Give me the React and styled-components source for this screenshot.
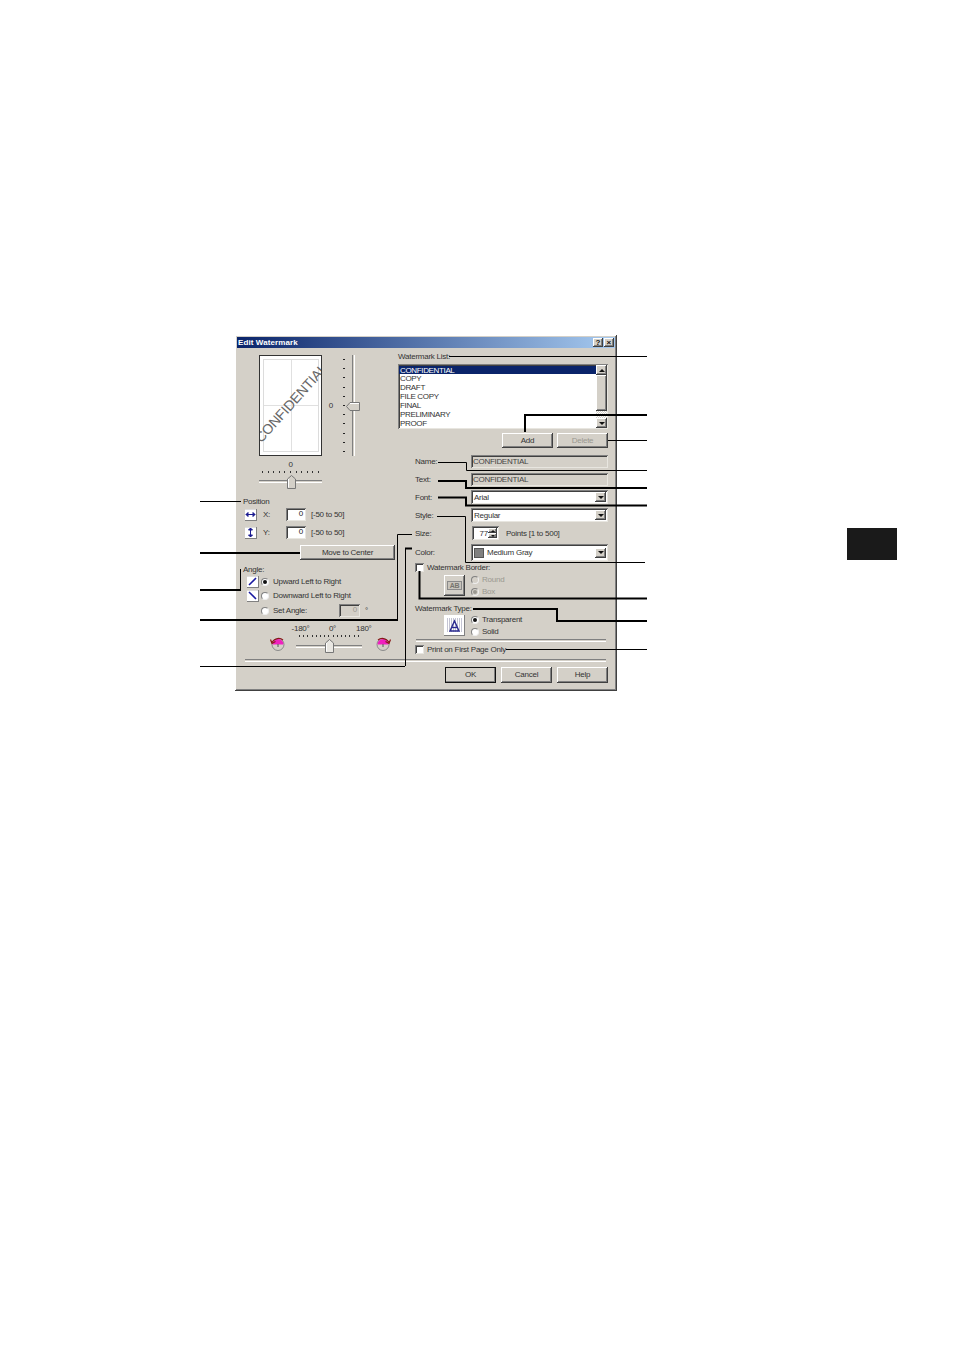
import React from 'react';
import styled, { createGlobalStyle, css } from 'styled-components';

const GlobalStyle = createGlobalStyle`
  html, body {
    margin: 0;
    background: #fff;
  }
  body {
    font-family: 'Liberation Sans', Arial, sans-serif;
  }
`;

const raised = css`
  background: #d4d0c8;
  box-shadow: inset -1px -1px 0 #404040, inset 1px 1px 0 #fff, inset -2px -2px 0 #808080;
`;
const sunken = css`
  box-shadow: inset 1px 1px 0 #808080, inset -1px -1px 0 #e8e6e0, inset 2px 2px 0 #404040;
`;

const Page = styled.div`
  position: relative;
  display: flex;
  align-items: flex-start;
  box-sizing: border-box;
  width: 954px;
  height: 1350px;
  padding: 335px 0 0 235px;
  overflow: hidden;
  background: #fff;
`;
const SideTab = styled.div`
  width: 50px;
  height: 32px;
  margin: 193px 0 0 230px;
  background: #1a1a1a;
`;
const Dialog = styled.div`
  ${raised}
  box-sizing: border-box;
  width: 382px;
  height: 356px;
  padding: 2px;
  font-size: 8px;
  line-height: 10px;
  letter-spacing: -0.25px;
  color: #333;
`;
const TitleBar = styled.div`
  display: flex;
  align-items: center;
  justify-content: space-between;
  height: 11px;
  padding: 0 1px;
  background: linear-gradient(90deg, #0a246a, #a6caf0);
  color: #fff;
  font-weight: 700;
  letter-spacing: 0.1px;
`;
const TitleButtons = styled.div`
  display: flex;
  gap: 1px;
`;
const TitleButton = styled.div`
  ${raised}
  width: 10px;
  height: 9px;
  color: #111;
  font-size: 8px;
  font-weight: 700;
  line-height: 9px;
  text-align: center;
`;
const Body = styled.div`
  display: grid;
  grid-template-columns: 160px 1fr;
  height: 311px;
`;
const Column = styled.div`
  display: flex;
  flex-direction: column;
  min-width: 0;
`;
const Row = styled.div`
  display: flex;
  align-items: center;
  flex: none;
  height: ${(p) => p.$h}px;
  margin-top: ${(p) => p.$mt || 0}px;
  padding-left: ${(p) => p.$pl || 0}px;
`;
const Label = styled.span`
  flex: none;
  padding-top: 1px;
  white-space: nowrap;
  width: ${(p) => (p.$w ? `${p.$w}px` : 'auto')};
  margin-left: ${(p) => p.$ml || 0}px;
  text-align: ${(p) => p.$align || 'left'};
  color: ${(p) => (p.$disabled ? '#9a9890' : 'inherit')};
`;

const Preview = styled.div`
  position: relative;
  flex: none;
  box-sizing: border-box;
  width: 63px;
  height: 101px;
  overflow: hidden;
  border: 1px solid #333;
  background: #fff;
`;
const PreviewMargin = styled.div`
  position: absolute;
  inset: 3px 2px 3px 3px;
  border: 1px solid #dcdcdc;
  background:
    linear-gradient(#e0e0e0, #e0e0e0) center / 100% 1px no-repeat,
    linear-gradient(#e0e0e0, #e0e0e0) center / 1px 100% no-repeat;
`;
const PreviewText = styled.span`
  position: absolute;
  left: 50%;
  top: 47%;
  color: #666;
  font-size: 14px;
  line-height: 16px;
  letter-spacing: -0.2px;
  white-space: nowrap;
  transform: translate(-50%, -50%) rotate(-48deg);
`;

const VSlider = styled.div`
  position: relative;
  flex: none;
  width: 18px;
  height: 101px;
  margin-left: 10px;
`;
const VTicks = styled.div`
  position: absolute;
  left: 0;
  top: 4px;
  bottom: 4px;
  display: flex;
  flex-direction: column;
  justify-content: space-between;
`;
const VTick = styled.i`
  display: block;
  width: 2px;
  height: 1px;
  background: #222;
`;
const VTrack = styled.div`
  position: absolute;
  left: 9px;
  top: 0;
  bottom: 0;
  width: 1px;
  border-left: 1px solid #808080;
  border-right: 1px solid #fff;
`;
const Thumb = styled.svg`
  position: absolute;
  left: ${(p) => p.$x}px;
  top: ${(p) => p.$y}px;
`;

const HSlider = styled.div`
  position: relative;
  flex: none;
  width: ${(p) => p.$w}px;
  height: ${(p) => p.$h}px;
  margin-left: ${(p) => p.$ml || 0}px;
`;
const HTicks = styled.div`
  position: absolute;
  left: ${(p) => p.$inset}px;
  right: ${(p) => p.$inset}px;
  top: ${(p) => p.$top}px;
  display: flex;
  justify-content: space-between;
`;
const HTick = styled.i`
  display: block;
  width: 1px;
  height: 2px;
  background: #333;
`;
const HTrack = styled.div`
  position: absolute;
  left: 0;
  right: 0;
  top: ${(p) => p.$top}px;
  height: 1px;
  border-top: 1px solid #808080;
  border-bottom: 1px solid #fff;
`;

const Icon = styled.svg`
  display: block;
  flex: none;
  margin-left: ${(p) => p.$ml || 0}px;
`;
const NumberBox = styled.div`
  ${sunken}
  flex: none;
  box-sizing: border-box;
  width: ${(p) => p.$w || 21}px;
  height: 13px;
  margin-left: ${(p) => p.$ml || 0}px;
  padding-right: 3px;
  background: ${(p) => (p.$disabled ? '#d4d0c8' : '#fff')};
  color: ${(p) => (p.$disabled ? '#9a9890' : '#222')};
  line-height: 12px;
  text-align: right;
`;
const Button = styled.div`
  ${raised}
  flex: none;
  width: ${(p) => p.$w || 51}px;
  height: ${(p) => p.$h || 15}px;
  margin-left: ${(p) => p.$ml || 0}px;
  box-sizing: border-box;
  line-height: ${(p) => p.$h || 15}px;
  text-align: center;
  color: ${(p) => (p.$disabled ? '#9a9890' : '#333')};
  ${(p) =>
    p.$default &&
    css`
      outline: 1px solid #111;
      outline-offset: -1px;
    `}
`;
const Radio = styled.i`
  position: relative;
  display: block;
  flex: none;
  box-sizing: border-box;
  width: 8px;
  height: 8px;
  margin-left: ${(p) => p.$ml || 0}px;
  border: 1px solid #808080;
  border-right-color: #eee;
  border-bottom-color: #eee;
  border-radius: 50%;
  background: ${(p) => (p.$disabled ? '#d4d0c8' : '#fff')};
  &::after {
    content: '';
    display: ${(p) => (p.$on ? 'block' : 'none')};
    position: absolute;
    left: 1px;
    top: 1px;
    width: 4px;
    height: 4px;
    border-radius: 50%;
    background: ${(p) => (p.$disabled ? '#9a9890' : '#111')};
  }
`;
const Checkbox = styled.i`
  ${sunken}
  display: block;
  flex: none;
  width: 9px;
  height: 9px;
  background: #fff;
`;

const ListBox = styled.div`
  ${sunken}
  display: flex;
  box-sizing: border-box;
  width: 210px;
  height: 65px;
  margin: ${(p) => p.$mt || 0}px 0 0 1px;
  padding: 1px;
  background: #fff;
`;
const ListItems = styled.div`
  flex: 1;
  overflow: hidden;
  padding-top: 0.5px;
`;
const ListItem = styled.div`
  height: 8.85px;
  padding-left: 1px;
  font-size: 8px;
  line-height: 9px;
  letter-spacing: -0.35px;
  color: ${(p) => (p.$selected ? '#fff' : '#333')};
  background: ${(p) => (p.$selected ? '#0a246a' : 'transparent')};
`;
const Scrollbar = styled.div`
  display: flex;
  flex-direction: column;
  flex: none;
  width: 11px;
  background: repeating-conic-gradient(#fff 0 25%, #d4d0c8 0 50%) 0 0 / 2px 2px;
`;
const ScrollThumb = styled.div`
  ${raised}
  height: 36px;
  margin-bottom: auto;
`;
const ArrowButton = styled.div`
  ${raised}
  display: flex;
  align-items: center;
  justify-content: center;
  flex: none;
  width: ${(p) => p.$w || 11}px;
  height: ${(p) => p.$h || 10}px;
  &::after {
    content: '';
    border-left: ${(p) => p.$size || 3}px solid transparent;
    border-right: ${(p) => p.$size || 3}px solid transparent;
    ${(p) => (p.$up ? 'border-bottom' : 'border-top')}: ${(p) => p.$size || 3}px solid #111;
  }
`;

const FieldLabel = styled.span`
  flex: none;
  box-sizing: border-box;
  width: 74px;
  padding: 1px 0 0 18px;
`;
const ReadOnlyField = styled.div`
  ${sunken}
  flex: none;
  box-sizing: border-box;
  width: 137px;
  height: 13px;
  padding-left: 2px;
  line-height: 13px;
  color: #444;
  letter-spacing: -0.3px;
  background: #d4d0c8;
`;
const Select = styled.div`
  ${sunken}
  display: flex;
  align-items: center;
  justify-content: space-between;
  flex: none;
  box-sizing: border-box;
  width: 137px;
  height: ${(p) => p.$h || 14}px;
  padding: 2px;
  background: #fff;
`;
const SelectValue = styled.span`
  display: flex;
  align-items: center;
  gap: 3px;
  padding: 1px 0 0 1px;
`;
const Swatch = styled.i`
  display: block;
  width: 10px;
  height: 10px;
  margin-top: -1px;
  border: 1px solid #555;
  box-sizing: border-box;
  background: #808080;
`;
const Spinner = styled.div`
  ${sunken}
  display: flex;
  align-items: center;
  justify-content: space-between;
  flex: none;
  box-sizing: border-box;
  width: 27px;
  height: 14px;
  margin-left: 1px;
  padding: 2px;
  background: #fff;
`;
const SpinButtons = styled.div`
  display: flex;
  flex-direction: column;
`;
const Divider = styled.div`
  flex: none;
  height: 1px;
  margin: ${(p) => p.$mt || 0}px ${(p) => p.$mr || 0}px 0 ${(p) => p.$ml || 0}px;
  border-top: 1px solid #808080;
  border-bottom: 1px solid #fff;
`;
const Footer = styled.div`
  display: flex;
  justify-content: flex-end;
  gap: 5px;
  height: 16px;
  margin-top: 5px;
  padding-right: 7px;
`;
const OptionStack = styled.div`
  display: flex;
  flex-direction: column;
  gap: 3px;
  margin-left: 6px;
`;
const Option = styled.div`
  display: flex;
  align-items: center;
  gap: 3px;
  height: 9px;
`;
const IconTile = styled.div`
  flex: none;
  box-sizing: border-box;
  width: 21px;
  height: 21px;
  margin-left: 47px;
  ${(p) =>
    p.$disabled
      ? css`
          ${raised}
        `
      : css`
          background: #fff;
          box-shadow: inset -1px -1px 0 #808080;
        `}
`;
const Leaders = styled.svg`
  position: absolute;
  left: 0;
  top: 0;
  pointer-events: none;
`;

const TickRow = ({ count, inset, top }) => (
  <HTicks $inset={inset} $top={top}>
    {Array.from({ length: count }, (_, i) => (
      <HTick key={i} />
    ))}
  </HTicks>
);

const SliderThumb = ({ x, y, pale }) => (
  <Thumb $x={x} $y={y} width="9" height="14" viewBox="0 0 9 14">
    <path d="M.5 4 4.500.5 8.500 4v9.500h-8z" fill={pale ? '#e9e7e2' : '#d4d0c8'} stroke="#777" />
    <path d="M1.500 4v8.500" stroke="#fff" />
  </Thumb>
);

const TileIcon = ({ ml, children }) => (
  <Icon $ml={ml} width="12" height="12" viewBox="0 0 12 12">
    <rect x="0" y="0" width="12" height="12" fill="#808080" />
    <rect x="0" y="0" width="11" height="11" fill="#fff" />
    <rect x="0" y="0" width="11" height="1" fill="#ddd" />
    {children}
  </Icon>
);

const RotateIcon = ({ ml, flip }) => (
  <Icon $ml={ml} width="16" height="15" viewBox="0 0 16 15">
    <circle cx="8" cy="8.500" r="6" fill="#d4d0c8" stroke="#8a8a8a" />
    <path d="M2.500 8.500a5.500 5.500 0 0 1 11 0z" fill="#f020c0" />
    <path d="M8 8v3" stroke="#555" />
    {flip ? (
      <path d="M3 4C6 1.500 11 2 14 6M15.500 3.500 14 7.500l-3.500-2" fill="none" stroke="#8a1818" strokeWidth="1.200" />
    ) : (
      <path d="M13 4C10 1.500 5 2 2 6M.5 3.500 2 7.500l3.500-2" fill="none" stroke="#8a1818" strokeWidth="1.200" />
    )}
  </Icon>
);

const thin = [
  'M449 356.500H647',
  'M608 440.500H647',
  'M438 462.500H466.500V470.500H647',
  'M437 516.500H465.500V562.500H645',
  'M506 649.500H647',
  'M200 501.500H241',
  'M240.500 569V590',
  'M397.500 620V534.500H412',
  'M405.500 666V548.500',
  'M200 666.500H405',
];
const thick = [
  'M525 432V415H647',
  'M438 481H466V488H647',
  'M438 497.500H466V505.500H647',
  'M419.500 571V598.500H647',
  'M473 609H557V621H647',
  'M200 553H300',
  'M200 590H241',
  'M200 620H398',
  'M405 548.500H412',
];

const App = () => (
  <>
    <GlobalStyle />
    <Page>
      <Dialog>
        <TitleBar>
          Edit Watermark
          <TitleButtons>
            <TitleButton>?</TitleButton>
            <TitleButton>×</TitleButton>
          </TitleButtons>
        </TitleBar>
        <Body>
          <Column>
            <Row $h={101} $mt={7} $pl={22}>
              <Preview>
                <PreviewMargin />
                <PreviewText>CONFIDENTIAL</PreviewText>
              </Preview>
              <Label $w={11} $align="right">0</Label>
              <VSlider>
                <VTicks>
                  {Array.from({ length: 11 }, (_, i) => (
                    <VTick key={i} />
                  ))}
                </VTicks>
                <VTrack />
                <Thumb $x={3} $y={47} width="14" height="9" viewBox="0 0 14 9">
                  <path d="M.5 4.500 4 .5h9.500v8H4z" fill="#d4d0c8" stroke="#777" />
                  <path d="M4 1.500h9" stroke="#fff" />
                </Thumb>
              </VSlider>
            </Row>
            <Row $h={10} $mt={3} $pl={22}>
              <Label $w={63} $align="center">0</Label>
            </Row>
            <Row $h={20} $pl={22}>
              <HSlider $w={63} $h={20}>
                <TickRow count={11} inset={3} top={2} />
                <HTrack $top={11} />
                <SliderThumb x={28} y={6} />
              </HSlider>
            </Row>
            <Row $h={10} $mt={7} $pl={6}>
              <Label>Position</Label>
            </Row>
            <Row $h={13} $mt={2} $pl={8}>
              <TileIcon>
                <path d="M1 5.500h9M1 5.500l2-2v4zM10 5.500l-2-2v4z" stroke="#1a1a90" fill="#1a1a90" />
              </TileIcon>
              <Label $w={23} $ml={6}>X:</Label>
              <NumberBox $w={20}>0</NumberBox>
              <Label $ml={5}>[-50 to 50]</Label>
            </Row>
            <Row $h={13} $mt={5} $pl={8}>
              <TileIcon>
                <path d="M5.500 1v9M5.500 1l-2 2h4zM5.500 10l-2-2h4z" stroke="#1a1a90" fill="#1a1a90" />
              </TileIcon>
              <Label $w={23} $ml={6}>Y:</Label>
              <NumberBox $w={20}>0</NumberBox>
              <Label $ml={5}>[-50 to 50]</Label>
            </Row>
            <Row $h={15} $mt={6} $pl={63}>
              <Button $w={95}>Move to Center</Button>
            </Row>
            <Row $h={10} $mt={4} $pl={6}>
              <Label>Angle:</Label>
            </Row>
            <Row $h={11} $mt={2} $pl={10}>
              <TileIcon>
                <path d="M2 9 9 2" stroke="#1a1aa0" strokeWidth="1.600" />
              </TileIcon>
              <Radio $ml={2} $on />
              <Label $ml={4}>Upward Left to Right</Label>
            </Row>
            <Row $h={11} $mt={3} $pl={10}>
              <TileIcon>
                <path d="M2 2 9 9" stroke="#1a1aa0" strokeWidth="1.600" />
              </TileIcon>
              <Radio $ml={2} />
              <Label $ml={4}>Downward Left to Right</Label>
            </Row>
            <Row $h={13} $mt={3} $pl={24}>
              <Radio />
              <Label $w={66} $ml={4}>Set Angle:</Label>
              <NumberBox $disabled>0</NumberBox>
              <Label $ml={5}>°</Label>
            </Row>
            <Row $h={10} $mt={6} $pl={54}>
              <Label $w={19} $align="center">-180°</Label>
              <Label $w={9} $ml={18} $align="center">0°</Label>
              <Label $w={15} $ml={19} $align="center">180°</Label>
            </Row>
            <Row $h={21} $pl={33}>
              <RotateIcon />
              <HSlider $w={66} $h={21} $ml={10}>
                <TickRow count={15} inset={3} top={2} />
                <HTrack $top={12} />
                <SliderThumb x={29} y={6} pale />
              </HSlider>
              <RotateIcon ml={13} flip />
            </Row>
          </Column>
          <Column>
            <Row $h={10} $mt={3} $pl={1}>
              <Label>Watermark List:</Label>
            </Row>
            <ListBox $mt={3}>
              <ListItems>
                <ListItem $selected>CONFIDENTIAL</ListItem>
                <ListItem>COPY</ListItem>
                <ListItem>DRAFT</ListItem>
                <ListItem>FILE COPY</ListItem>
                <ListItem>FINAL</ListItem>
                <ListItem>PRELIMINARY</ListItem>
                <ListItem>PROOF</ListItem>
              </ListItems>
              <Scrollbar>
                <ArrowButton $up />
                <ScrollThumb />
                <ArrowButton />
              </Scrollbar>
            </ListBox>
            <Row $h={15} $mt={4} $pl={105}>
              <Button>Add</Button>
              <Button $disabled $ml={4}>Delete</Button>
            </Row>
            <Row $h={13} $mt={7}>
              <FieldLabel>Name:</FieldLabel>
              <ReadOnlyField>CONFIDENTIAL</ReadOnlyField>
            </Row>
            <Row $h={13} $mt={5}>
              <FieldLabel>Text:</FieldLabel>
              <ReadOnlyField>CONFIDENTIAL</ReadOnlyField>
            </Row>
            <Row $h={14} $mt={4}>
              <FieldLabel>Font:</FieldLabel>
              <Select>
                <SelectValue>Arial</SelectValue>
                <ArrowButton />
              </Select>
            </Row>
            <Row $h={14} $mt={4}>
              <FieldLabel>Style:</FieldLabel>
              <Select>
                <SelectValue>Regular</SelectValue>
                <ArrowButton />
              </Select>
            </Row>
            <Row $h={14} $mt={4}>
              <FieldLabel>Size:</FieldLabel>
              <Spinner>
                <Label $w={14} $align="right">77</Label>
                <SpinButtons>
                  <ArrowButton $up $w={9} $h={5} $size={2} />
                  <ArrowButton $w={9} $h={5} $size={2} />
                </SpinButtons>
              </Spinner>
              <Label $ml={7}>Points [1 to 500]</Label>
            </Row>
            <Row $h={17} $mt={4}>
              <FieldLabel>Color:</FieldLabel>
              <Select $h={17}>
                <SelectValue><Swatch />Medium Gray</SelectValue>
                <ArrowButton />
              </Select>
            </Row>
            <Row $h={9} $mt={2} $pl={18}>
              <Checkbox />
              <Label $ml={3}>Watermark Border:</Label>
            </Row>
            <Row $h={21} $mt={3}>
              <IconTile $disabled>
                <Icon width="21" height="21" viewBox="0 0 21 21">
                  <rect x="3.500" y="6.500" width="14" height="8" fill="#c8c4bc" stroke="#8a8a8a" />
                  <text x="10.500" y="13" fontSize="7" fontWeight="700" textAnchor="middle" fill="#77756f">AB</text>
                </Icon>
              </IconTile>
              <OptionStack>
                <Option><Radio $disabled /><Label $disabled>Round</Label></Option>
                <Option><Radio $disabled $on /><Label $disabled>Box</Label></Option>
              </OptionStack>
            </Row>
            <Row $h={10} $mt={7} $pl={18}>
              <Label>Watermark Type:</Label>
            </Row>
            <Row $h={21} $mt={2}>
              <IconTile>
                <Icon width="21" height="21" viewBox="0 0 21 21">
                  <path d="M3 4h15M3 6h15M3 8h15M3 10h15M3 12h15M3 14h15M3 16h15" stroke="#8a8aa8" strokeDasharray="1 1" />
                  <path d="M10.500 6 15 16H6z" fill="none" stroke="#2a2a90" strokeWidth="1.400" />
                  <path d="M8 12.500h5" stroke="#2a2a90" strokeWidth="1.400" />
                </Icon>
              </IconTile>
              <OptionStack>
                <Option><Radio $on /><Label>Transparent</Label></Option>
                <Option><Radio /><Label>Solid</Label></Option>
              </OptionStack>
            </Row>
            <Divider $mt={3} $ml={19} $mr={9} />
            <Row $h={9} $mt={3} $pl={18}>
              <Checkbox />
              <Label $ml={3}>Print on First Page Only</Label>
            </Row>
          </Column>
        </Body>
        <Divider $ml={8} $mr={9} />
        <Footer>
          <Button $default $h={16}>OK</Button>
          <Button $h={16}>Cancel</Button>
          <Button $h={16}>Help</Button>
        </Footer>
      </Dialog>
      <SideTab />
      <Leaders width="954" height="1350" viewBox="0 0 954 1350" fill="none" stroke="#000">
        {thin.map((d) => (
          <path key={d} d={d} strokeWidth="1" />
        ))}
        {thick.map((d) => (
          <path key={d} d={d} strokeWidth="2" />
        ))}
      </Leaders>
    </Page>
  </>
);

export default App;
